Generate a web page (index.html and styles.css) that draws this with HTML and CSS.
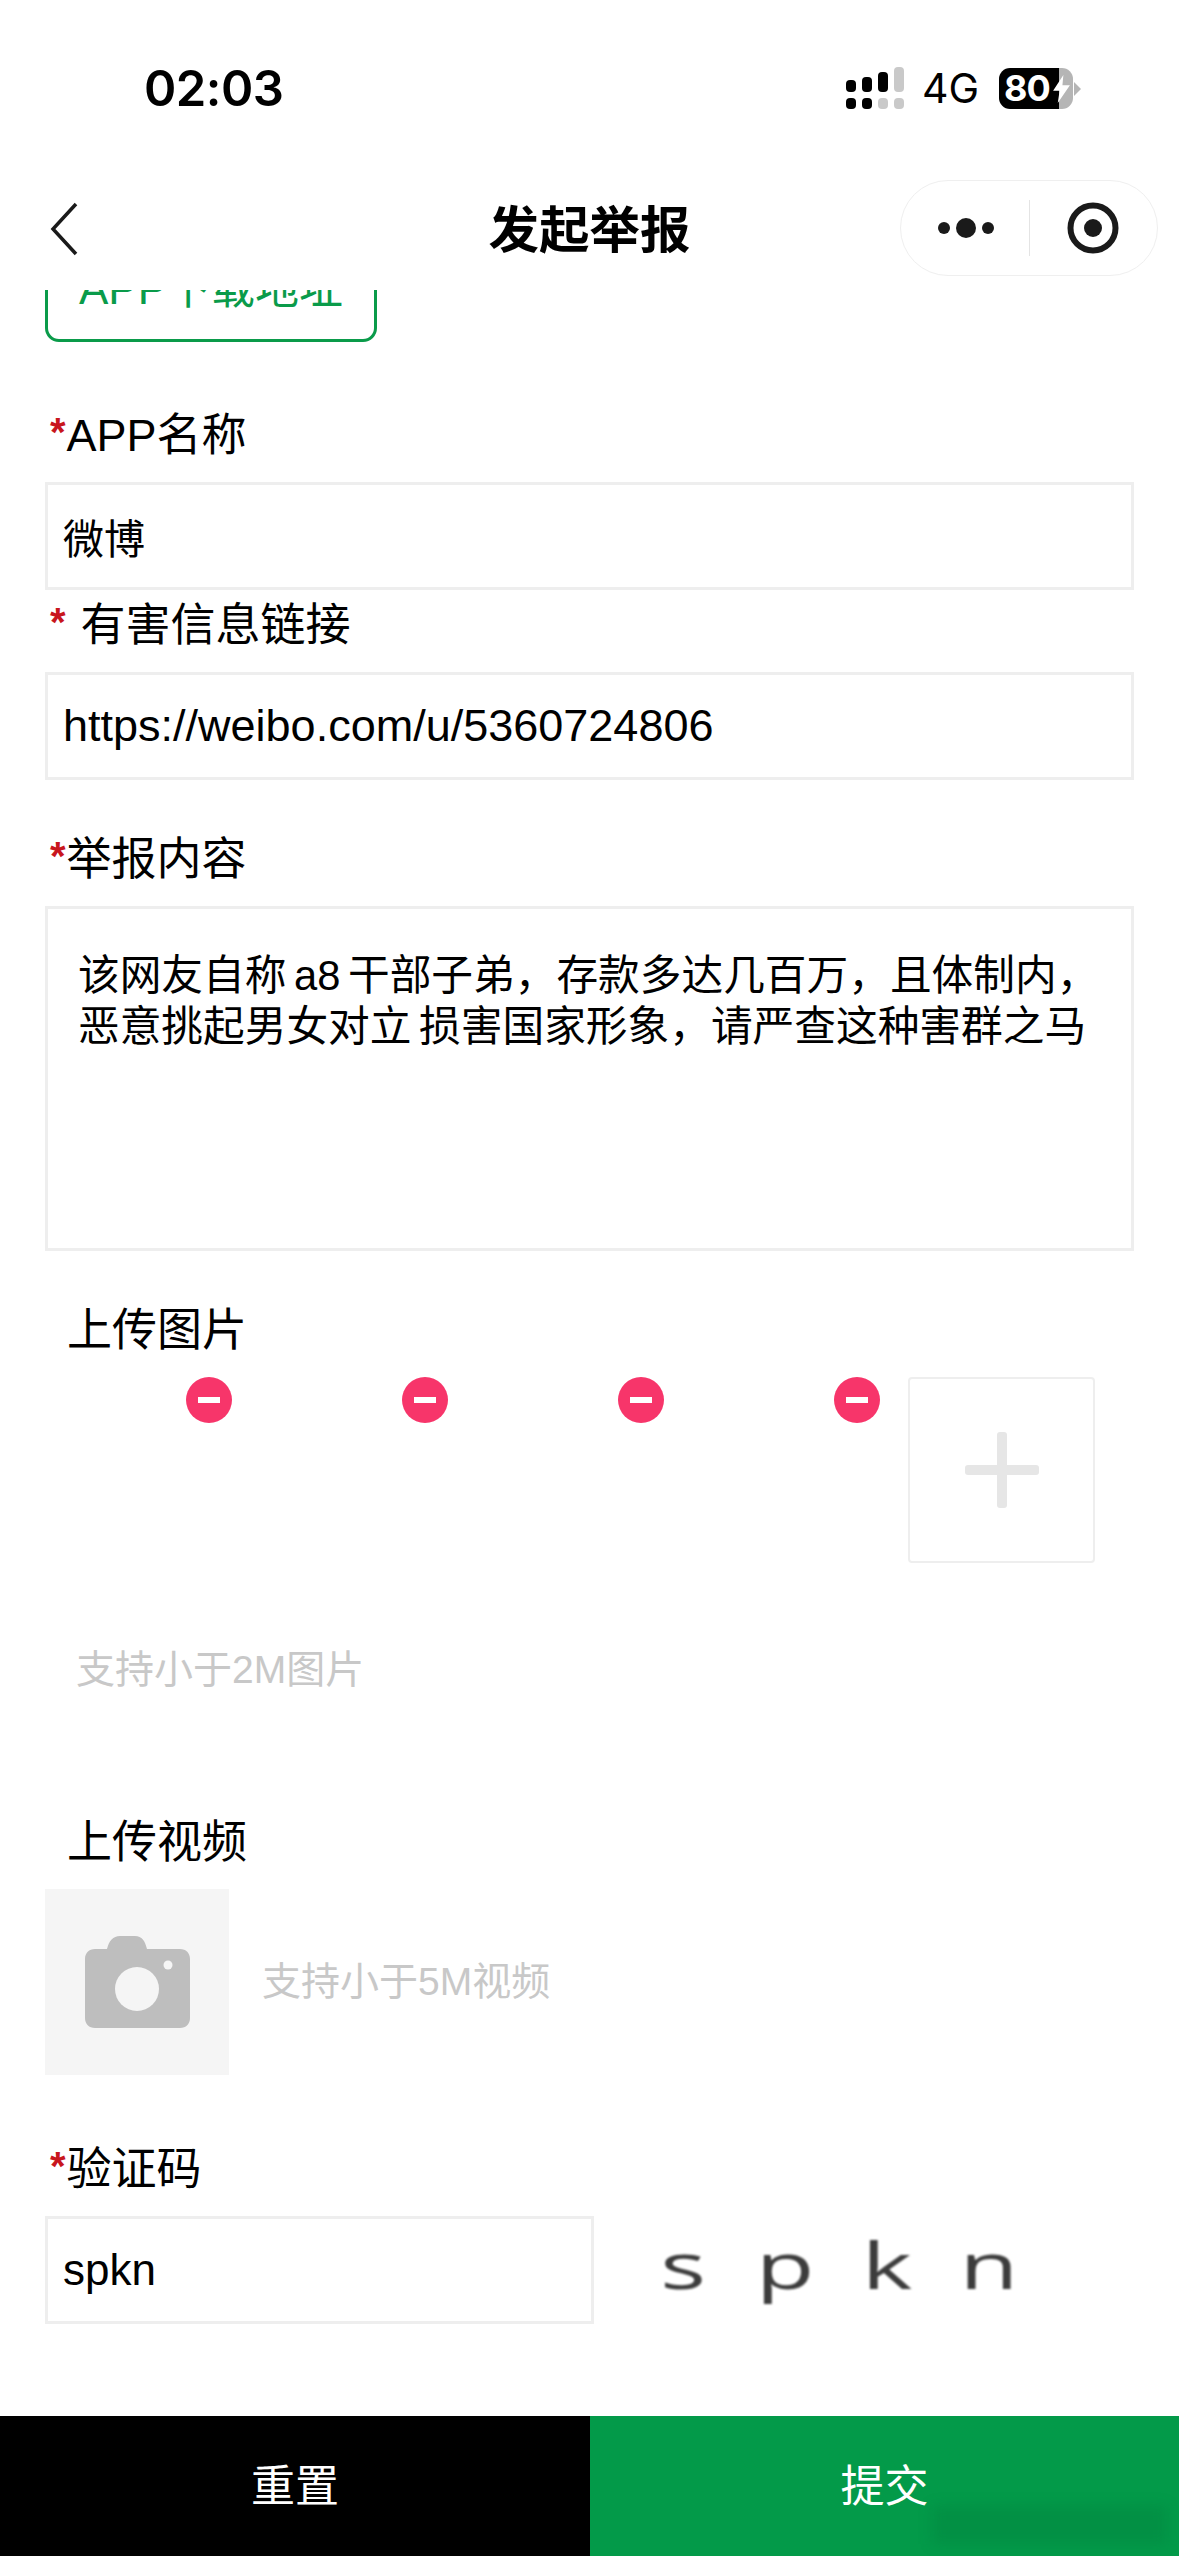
FILE: index.html
```html
<!DOCTYPE html>
<html lang="zh-CN">

<head>
    <meta charset="UTF-8">
    <meta name="viewport" content="width=device-width, initial-scale=1.0">
    <title>发起举报</title>
    <link rel="stylesheet" href="styles.css">
</head>

<body>
    <div class="status-bar">
        <span class="time">02:03</span>
        <div class="status-right">
            <svg class="signal" width="66" height="42" viewBox="0 0 66 42">
                <rect x="0" y="13" width="10" height="12" rx="4" fill="#000" />
                <rect x="0" y="31" width="10" height="11" rx="4" fill="#000" />
                <rect x="16" y="10" width="10" height="15" rx="4" fill="#000" />
                <rect x="16" y="31" width="10" height="11" rx="4" fill="#000" />
                <rect x="32" y="5" width="10" height="20" rx="4" fill="#000" />
                <rect x="32" y="31" width="10" height="11" rx="4" fill="#c9c9c9" />
                <rect x="48" y="0" width="10" height="25" rx="4" fill="#c9c9c9" />
                <rect x="48" y="31" width="10" height="11" rx="4" fill="#c9c9c9" />
            </svg>
            <span class="net">4G</span>
            <div class="battery">
                <span class="battery-num">80</span>
                <svg class="bolt" width="17" height="28" viewBox="0 0 18 30">
                    <path d="M11 0 L0 17 L7 17 L5 30 L18 11 L10 11 Z" fill="#fff" />
                </svg>
            </div>
        </div>
    </div>

    <header class="nav">
        <svg class="back" width="34" height="54" viewBox="0 0 34 54">
            <path d="M28 2 L5 27 L28 52" fill="none" stroke="#1a1a1a" stroke-width="3.5" />
        </svg>
        <h1 class="nav-title">发起举报</h1>
        <div class="capsule">
            <svg width="56" height="22" viewBox="0 0 56 22">
                <circle cx="6" cy="11" r="6" fill="#1a1a1a" />
                <circle cx="28" cy="11" r="10" fill="#1a1a1a" />
                <circle cx="50" cy="11" r="6" fill="#1a1a1a" />
            </svg>
            <span class="capsule-line"></span>
            <svg width="52" height="52" viewBox="0 0 52 52">
                <circle cx="26" cy="26" r="22.5" fill="none" stroke="#1a1a1a" stroke-width="6" />
                <circle cx="26" cy="26" r="9" fill="#1a1a1a" />
            </svg>
        </div>
    </header>

    <main class="form">
        <div class="download-btn">APP下载地址</div>

        <div class="label label-app"><span class="req">*</span>APP名称</div>
        <div class="field field-cn">微博</div>

        <div class="label label-link"><span class="req req-gap">*</span>有害信息链接</div>
        <div class="field field-url">https://weibo.com/u/5360724806</div>

        <div class="label label-content"><span class="req">*</span>举报内容</div>
        <div class="textarea">该网友自称 a8 干部子弟，存款多达几百万，且体制内，<br>恶意挑起男女对立 损害国家形象，请严查这种害群之马</div>

        <div class="label label-plain label-pic">上传图片</div>
        <div class="upload-row">
            <div class="thumb"><span class="minus"></span></div>
            <div class="thumb"><span class="minus"></span></div>
            <div class="thumb"><span class="minus"></span></div>
            <div class="thumb"><span class="minus"></span></div>
            <div class="add-box"><span class="add-h"></span><span class="add-v"></span></div>
        </div>
        <div class="hint hint-pic">支持小于2M图片</div>

        <div class="label label-plain label-video">上传视频</div>
        <div class="video-row">
            <div class="video-box">
                <svg width="105" height="92" viewBox="0 0 105 92">
                    <path d="M10 13 H22 C24 5 28 0 35 0 H50 C57 0 60 5 62 13 H95 C101 13 105 17 105 23 V82 C105 88 101 92 95 92 H10 C4 92 0 88 0 82 V23 C0 17 4 13 10 13 Z" fill="#bebebe" />
                    <circle cx="52" cy="53" r="22" fill="#f5f5f5" />
                    <circle cx="83" cy="29" r="4.5" fill="#f5f5f5" />
                </svg>
            </div>
            <div class="hint hint-video">支持小于5M视频</div>
        </div>

        <div class="label label-code"><span class="req">*</span>验证码</div>
        <div class="code-row">
            <div class="field field-code">spkn</div>
            <div class="captcha">
                <span>s</span><span>p</span><span>k</span><span>n</span>
            </div>
        </div>
    </main>

    <footer class="actions">
        <div class="action action-reset">重置</div>
        <div class="action action-submit">提交</div>
    </footer>
</body>

</html>
```

FILE: styles.css
```css
* {
    box-sizing: border-box;
}

html,
body {
    margin: 0;
    padding: 0;
}

body {
    display: flex;
    flex-direction: column;
    width: 1179px;
    height: 2556px;
    overflow: hidden;
    background: #fff;
    color: #000;
    font-family: "Liberation Sans", "Noto Sans CJK SC", sans-serif;
}

.status-bar {
    display: flex;
    align-items: center;
    justify-content: space-between;
    height: 176px;
    padding: 0 0 0 144px;
    flex-shrink: 0;
}

.time {
    font-family: Inter, sans-serif;
    font-size: 49px;
    font-weight: 600;
    letter-spacing: -0.5px;
}

.status-right {
    display: flex;
    align-items: center;
    margin-right: 106px;
}

.net {
    margin-left: 10px;
    font-family: Inter, sans-serif;
    font-size: 41px;
}

.battery {
    position: relative;
    display: flex;
    align-items: center;
    width: 74px;
    height: 41px;
    margin-left: 20px;
    padding-left: 5px;
    border-radius: 11px;
    background: linear-gradient(to right, #000 0, #000 60px, #b5b5b5 60px);
    color: #fff;
}

.battery::after {
    content: "";
    position: absolute;
    right: -8px;
    top: 14px;
    border-left: 7px solid #b5b5b5;
    border-top: 7px solid transparent;
    border-bottom: 7px solid transparent;
}

.battery-num {
    font-family: Inter, sans-serif;
    font-size: 36px;
    font-weight: 700;
    letter-spacing: -1px;
}

.bolt {
    position: absolute;
    left: 54px;
    top: 7px;
}

.nav {
    position: relative;
    display: flex;
    align-items: center;
    justify-content: center;
    height: 114px;
    padding-bottom: 14px;
    flex-shrink: 0;
}

.back {
    position: absolute;
    left: 48px;
    top: 26px;
}

.nav-title {
    margin: 0;
    font-size: 50.5px;
    font-weight: 700;
}

.capsule {
    position: absolute;
    left: 900px;
    top: 4px;
    display: flex;
    align-items: center;
    width: 258px;
    height: 96px;
    padding-left: 37px;
    border: 1px solid #efefef;
    border-radius: 48px;
}

.capsule-line {
    width: 1px;
    height: 56px;
    margin: 0 37px 0 35px;
    background: #e4e4e4;
}

.form {
    flex: 1;
    min-height: 0;
    padding: 0 45px;
    overflow: hidden;
}

.download-btn {
    width: 332px;
    height: 90px;
    margin-top: -38px;
    border: 3px solid #0a9b4a;
    border-radius: 14px;
    color: #0a9b4a;
    font-size: 44px;
    line-height: 68px;
    text-align: center;
}

.label {
    height: 50px;
    font-size: 45px;
    line-height: 55px;
    white-space: nowrap;
}

.label-app {
    margin-top: 66px;
}

.label-link {
    margin-top: 8px;
}

.label-content {
    margin-top: 52px;
}

.label-plain {
    padding-left: 22px;
}

.label-pic {
    margin-top: 52px;
}

.label-video {
    margin-top: 121px;
}

.label-code {
    margin-top: 67px;
}

.req {
    margin: 0 1px 0 5px;
    color: #c8161d;
    font-size: 40px;
    font-weight: 700;
    line-height: 1;
    vertical-align: 5px;
}

.req-gap {
    margin-right: 15px;
}

.field {
    display: flex;
    align-items: center;
    height: 108px;
    margin-top: 24px;
    padding-left: 15px;
    border: 3px solid #eee;
    font-size: 44px;
}

.field-cn {
    font-size: 41px;
}

.field-url {
    font-size: 45px;
}

.textarea {
    height: 345px;
    margin-top: 24px;
    padding: 41px 0 0 30px;
    border: 3px solid #eee;
    font-size: 41.7px;
    line-height: 51px;
    word-spacing: -4px;
    white-space: nowrap;
}

.upload-row {
    display: flex;
    height: 186px;
    margin-top: 24px;
}

.thumb {
    position: relative;
    width: 216px;
    flex-shrink: 0;
}

.thumb:first-child {
    width: 187px;
}

.minus {
    position: absolute;
    right: 0;
    top: 0;
    width: 46px;
    height: 46px;
    border-radius: 50%;
    background: #f7356a;
}

.minus::after {
    content: "";
    position: absolute;
    left: 12px;
    top: 20px;
    width: 22px;
    height: 6px;
    background: #fff;
}

.add-box {
    position: relative;
    width: 187px;
    height: 186px;
    margin-left: 28px;
    border: 2px solid #eee;
    border-radius: 4px;
}

.add-h {
    position: absolute;
    left: 55px;
    top: 86px;
    width: 74px;
    height: 10px;
    border-radius: 3px;
    background: #e6e6e6;
}

.add-v {
    position: absolute;
    left: 87px;
    top: 53px;
    width: 10px;
    height: 76px;
    border-radius: 3px;
    background: #e6e6e6;
}

.hint {
    color: #c8c8c8;
    font-size: 39px;
    white-space: nowrap;
}

.hint-pic {
    margin-top: 75px;
    padding-left: 31px;
}

.hint-video {
    padding-bottom: 9px;
}

.video-row {
    display: flex;
    align-items: center;
    gap: 33px;
    margin-top: 24px;
}

.video-box {
    display: flex;
    align-items: center;
    justify-content: center;
    width: 184px;
    height: 186px;
    background: #f5f5f5;
}

.code-row {
    display: flex;
    align-items: center;
    margin-top: 24px;
}

.field-code {
    width: 549px;
    margin-top: 0;
}

.captcha {
    display: flex;
    align-items: center;
    height: 108px;
    margin-left: 38px;
    padding-bottom: 12px;
    color: #3c3c3c;
    font-family: "Open Sans", sans-serif;
    font-size: 64px;
    filter: blur(0.8px);
}

.captcha span {
    display: block;
    width: 102px;
    text-align: center;
    transform: scaleX(1.5);
}

.actions {
    display: flex;
    height: 140px;
    flex-shrink: 0;
}

.action {
    display: flex;
    align-items: center;
    justify-content: center;
    padding-bottom: 6px;
    color: #fff;
    font-size: 44px;
}

.action-reset {
    width: 590px;
    background: #000;
}

.action-submit {
    position: relative;
    width: 589px;
    background: #039a49;
}

/* watermark smudge, bottom right */
.action-submit::after {
    content: "";
    position: absolute;
    right: 12px;
    bottom: 12px;
    width: 235px;
    height: 38px;
    background: rgba(0, 90, 40, 0.15);
    filter: blur(7px);
}
```
